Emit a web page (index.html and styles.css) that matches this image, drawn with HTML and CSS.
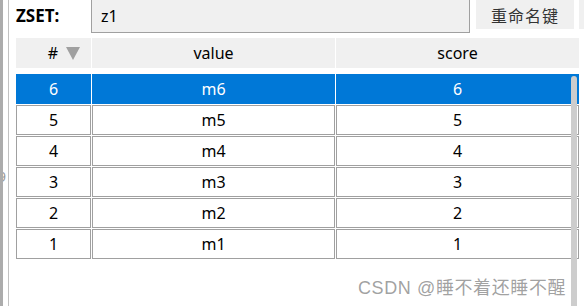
FILE: index.html
```html
<!DOCTYPE html>
<html>
<head>
<meta charset="utf-8">
<link rel="stylesheet" href="styles.css">
</head>
<body>
<div class="window">
  <div class="edge"></div>
  <div class="gutter"><span class="clipped">9</span></div>
  <div class="main">
    <div class="toolbar">
      <div class="label">ZSET:</div>
      <div class="field">z1</div>
      <div class="button">重命名键</div>
      <div class="stub"></div>
    </div>
    <div class="thead">
      <div class="th th-num"><span>#</span><svg class="sort" width="14" height="13" viewBox="0 0 14 13"><polygon points="0,0 14,0 7,13" fill="#a0a0a0"/></svg></div>
      <div class="th">value</div>
      <div class="th">score</div>
    </div>
    <div class="tbody">
      <div class="td sel">6</div><div class="td sel">m6</div><div class="td sel">6</div>
      <div class="td">5</div><div class="td">m5</div><div class="td">5</div>
      <div class="td">4</div><div class="td">m4</div><div class="td">4</div>
      <div class="td">3</div><div class="td">m3</div><div class="td">3</div>
      <div class="td">2</div><div class="td">m2</div><div class="td">2</div>
      <div class="td">1</div><div class="td">m1</div><div class="td">1</div>
    </div>
    <div class="scrollbar"></div>
    <div class="watermark">CSDN @睡不着还睡不醒</div>
  </div>
</div>
</body>
</html>
```
FILE: styles.css
```css
html, body {
  margin: 0;
  padding: 0;
  background: #ffffff;
}
body {
  font-family: "Noto Sans", "Noto Sans CJK SC", sans-serif;
  font-size: 16px;
  color: #000;
}
.window {
  display: flex;
  width: 584px;
  height: 306px;
  overflow: hidden;
}
.edge {
  width: 3px;
  background: #acacac;
  flex: none;
}
.gutter {
  width: 5px;
  flex: none;
  border-right: 1px solid #c2c2c2;
  overflow: hidden;
  padding-top: 167px;
  box-sizing: content-box;
}
.clipped {
  display: block;
  margin-left: -5px;
  color: #9a9a9a;
  font-size: 14px;
  line-height: 20px;
}
.main {
  flex: 1;
  position: relative;
  padding-left: 7px;
  display: flex;
  flex-direction: column;
}
.toolbar {
  display: flex;
  align-items: flex-start;
  height: 33px;
  flex: none;
}
.label {
  width: 75px;
  font-weight: bold;
  font-size: 17px;
  line-height: 32px;
  flex: none;
}
.field {
  box-sizing: border-box;
  width: 379px;
  height: 35px;
  margin-top: -2px;
  border: 1px solid #a0a0a0;
  background: #f0f0f0;
  padding-left: 9px;
  line-height: 34px;
  font-size: 16px;
  flex: none;
}
.button {
  width: 98px;
  height: 29px;
  margin-left: 6px;
  background: #f0f0f0;
  display: flex;
  align-items: center;
  justify-content: center;
  font-family: "Noto Sans CJK SC", sans-serif;
  font-size: 16px;
  color: #333;
  letter-spacing: 1px;
  flex: none;
}
.stub {
  width: 8px;
  height: 29px;
  margin-left: 5px;
  background: #f0f0f0;
  flex: none;
}
.thead, .tbody {
  display: grid;
  grid-template-columns: 75px 243px 243px;
  column-gap: 1px;
}
.thead {
  margin-top: 5px;
}
.tbody {
  margin-top: 6px;
  row-gap: 1px;
}
.th {
  height: 30px;
  background: #f0f0f0;
  display: flex;
  align-items: center;
  justify-content: center;
}
.th-num {
  justify-content: flex-end;
  padding-right: 11px;
  gap: 8px;
}
.sort {
  display: block;
}
.td {
  box-sizing: border-box;
  height: 30px;
  border: 1px solid #a0a0a0;
  display: flex;
  align-items: center;
  justify-content: center;
}
.td.sel {
  background: #0078d7;
  border-color: #0078d7;
  color: #ffffff;
}
.scrollbar {
  position: absolute;
  left: 562px;
  top: 76px;
  width: 6px;
  height: 232px;
  background: #cdcdcd;
  border-radius: 3px 3px 0 0;
}
.watermark {
  position: absolute;
  left: 349px;
  top: 273px;
  font-family: "Liberation Sans", "Noto Sans CJK SC", sans-serif;
  font-size: 18px;
  letter-spacing: 0.6px;
  color: rgba(120, 120, 120, 0.7);
  white-space: nowrap;
}
```
